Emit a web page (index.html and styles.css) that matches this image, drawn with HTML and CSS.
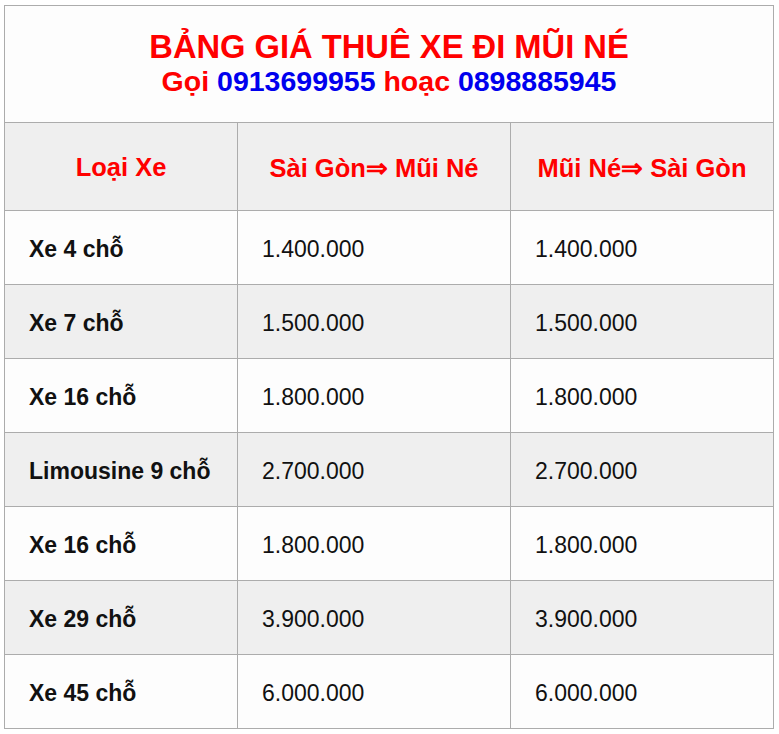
FILE: index.html
```html
<!DOCTYPE html>
<html lang="vi">
<head>
<meta charset="utf-8">
<link rel="stylesheet" href="styles.css">
</head>
<body>
<table class="price">
  <colgroup>
    <col class="c1"><col class="c2"><col class="c3">
  </colgroup>
  <tr class="title-row">
    <td colspan="3" class="title">
      <div class="t1">BẢNG GIÁ THUÊ XE ĐI MŨI NÉ</div>
      <div class="t2">Gọi <span class="phone">0913699955</span> hoạc <span class="phone">0898885945</span></div>
    </td>
  </tr>
  <tr class="head">
    <th>Loại Xe</th>
    <th>Sài Gòn⇒ Mũi Né</th>
    <th>Mũi Né⇒ Sài Gòn</th>
  </tr>
  <tr><td class="name">Xe 4 chỗ</td><td>1.400.000</td><td>1.400.000</td></tr>
  <tr class="alt"><td class="name">Xe 7 chỗ</td><td>1.500.000</td><td>1.500.000</td></tr>
  <tr><td class="name">Xe 16 chỗ</td><td>1.800.000</td><td>1.800.000</td></tr>
  <tr class="alt"><td class="name">Limousine 9 chỗ</td><td>2.700.000</td><td>2.700.000</td></tr>
  <tr><td class="name">Xe 16 chỗ</td><td>1.800.000</td><td>1.800.000</td></tr>
  <tr class="alt"><td class="name">Xe 29 chỗ</td><td>3.900.000</td><td>3.900.000</td></tr>
  <tr><td class="name">Xe 45 chỗ</td><td>6.000.000</td><td>6.000.000</td></tr>
</table>
</body>
</html>
```
FILE: styles.css
```css
html, body {
  margin: 0;
  padding: 0;
  background: #ffffff;
}
body {
  padding: 5px 0 0 4px;
  font-family: "Liberation Sans", Arial, sans-serif;
}
.price {
  border-collapse: collapse;
  table-layout: fixed;
  width: 769px;
  background: #fdfdfd;
}
.c1 { width: 233px; }
.c2 { width: 273px; }
.c3 { width: 263px; }
.price td, .price th {
  border: 1px solid #acacac;
  padding: 3px 0 0 24px;
  height: 70px;
  font-size: 23px;
  color: #111;
  text-align: left;
  vertical-align: middle;
}
.price td.name {
  font-weight: bold;
}
.price tr.alt td {
  background: #efefef;
}
.price td.title {
  height: 116px;
  padding: 0;
  text-align: center;
  color: #ff0000;
  font-weight: bold;
}
.t1 {
  font-size: 32.7px;
  line-height: 36px;
  margin-top: -2px;
}
.t2 {
  font-size: 28.5px;
  line-height: 32px;
}
.phone {
  color: #0000ee;
}
.price tr.head th {
  background: #efefef;
  color: #ff0000;
  font-size: 25.5px;
  font-weight: bold;
  text-align: center;
  padding: 2px 0 0 0;
  height: 85px;
}
```
